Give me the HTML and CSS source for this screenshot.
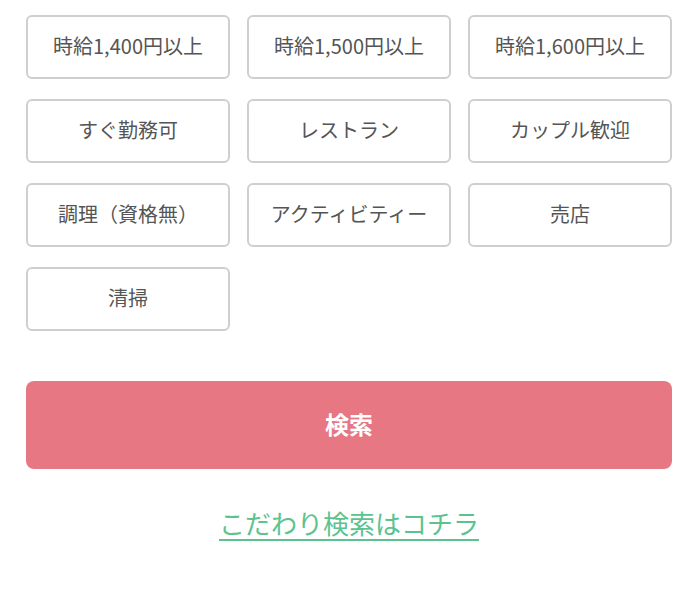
FILE: index.html
```html
<!DOCTYPE html>
<html lang="ja">
<head>
<meta charset="utf-8">
<link rel="stylesheet" href="styles.css">
</head>
<body>
<div class="page">
  <div class="tags">
    <button class="tag">時給1,400円以上</button>
    <button class="tag">時給1,500円以上</button>
    <button class="tag">時給1,600円以上</button>
    <button class="tag">すぐ勤務可</button>
    <button class="tag">レストラン</button>
    <button class="tag">カップル歓迎</button>
    <button class="tag">調理（資格無）</button>
    <button class="tag">アクティビティー</button>
    <button class="tag">売店</button>
    <button class="tag">清掃</button>
  </div>
  <button class="search">検索</button>
  <div class="more"><a href="#" class="more-link">こだわり検索はコチラ</a></div>
</div>
</body>
</html>
```

FILE: styles.css
```css
html, body {
  margin: 0;
  padding: 0;
  background: #fff;
}
body {
  font-family: "Noto Sans CJK JP", "Noto Sans", sans-serif;
  color: #555;
}
.page {
  padding: 15px 26px 0;
}
.tags {
  display: grid;
  grid-template-columns: repeat(3, 204px);
  column-gap: 17px;
  row-gap: 20px;
}
.tag {
  height: 64px;
  box-sizing: border-box;
  border: 2px solid #cfcfcf;
  border-radius: 6px;
  background: #fff;
  color: #555;
  font-family: inherit;
  font-size: 20px;
  padding: 0 0 3px;
  display: flex;
  align-items: center;
  justify-content: center;
  letter-spacing: 0;
}
.search {
  display: flex;
  align-items: center;
  justify-content: center;
  width: 646px;
  height: 88px;
  margin-top: 50px;
  border: none;
  border-radius: 8px;
  background: #e67783;
  color: #fff;
  font-family: inherit;
  font-weight: bold;
  font-size: 24px;
  padding: 0 0 4px;
}
.more {
  text-align: center;
  margin-top: 36px;
}
.more-link {
  color: #5cc38f;
  font-size: 26px;
  line-height: 36px;
  text-decoration: underline;
  text-decoration-thickness: 2px;
  text-underline-offset: 5px;
}
```
